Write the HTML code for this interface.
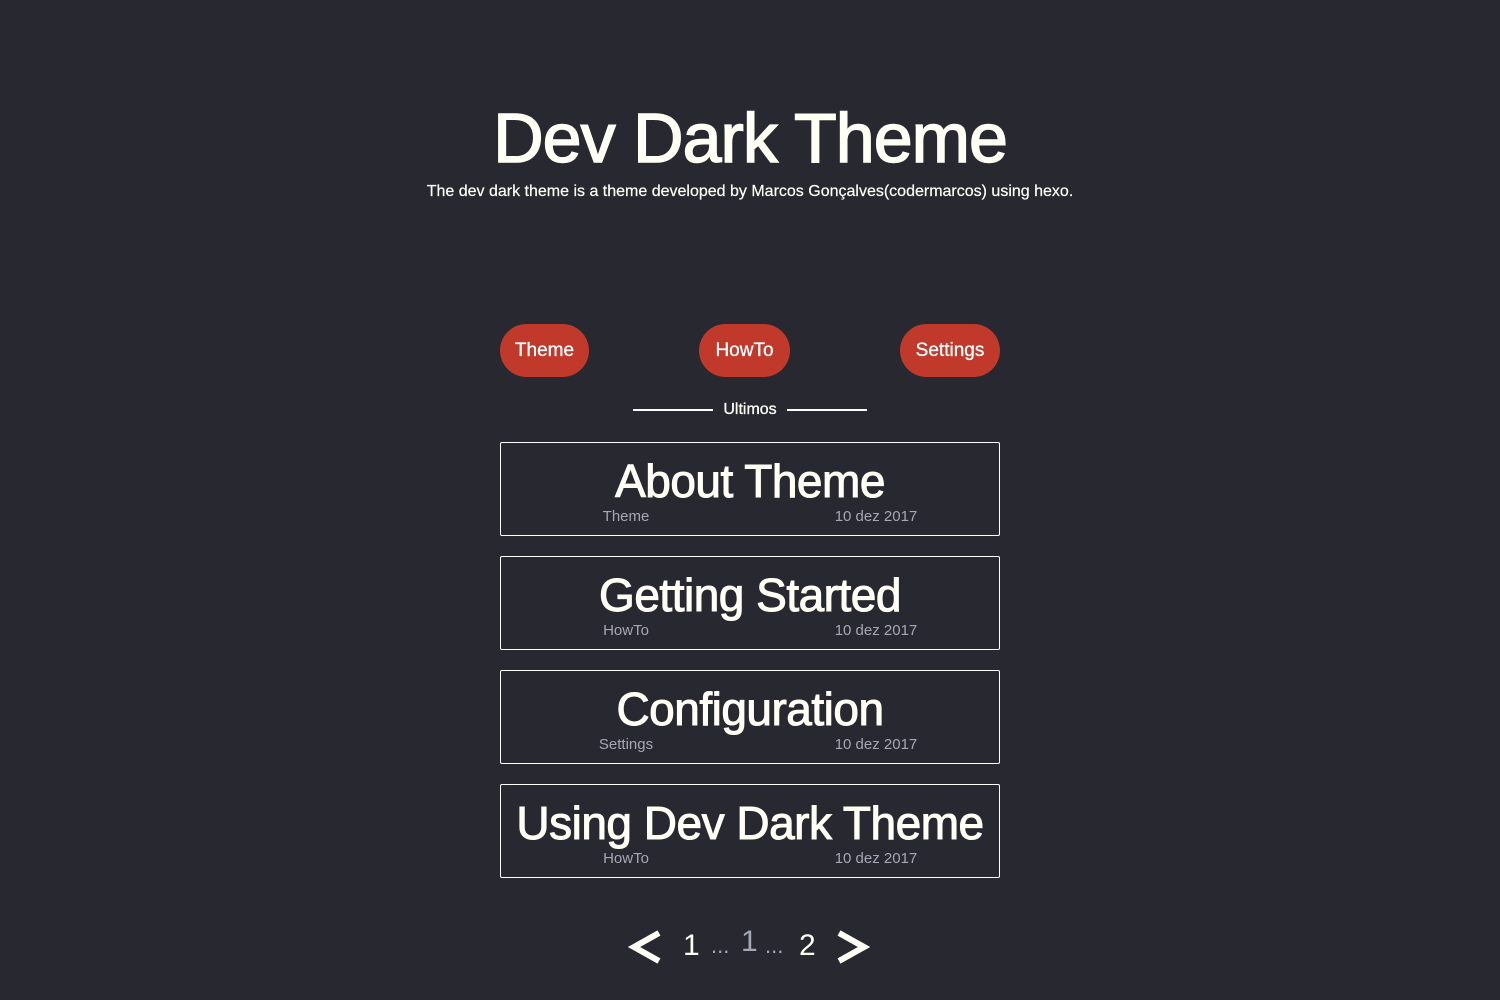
<!DOCTYPE html>
<html><head><meta charset="utf-8"><style>
*{margin:0;padding:0;box-sizing:border-box}
body{width:1500px;height:1000px;background:#282830;font-family:"Liberation Sans",sans-serif;color:#fffff5;position:relative;overflow:hidden}
.abs{position:absolute}
h1{position:absolute;left:0;width:1500px;top:98px;text-align:center;font-size:70px;font-weight:normal;letter-spacing:-1px;line-height:80px;-webkit-text-stroke:1.5px #fffff5}
.sub{top:183px;left:0;width:1500px;text-align:center;font-size:16px;line-height:18px;-webkit-text-stroke:0.2px #fff}
.btn{position:absolute;top:324px;height:53px;border-radius:27px;background:#c0392b;color:#fff;font-size:19px;line-height:53px;text-align:center;-webkit-text-stroke:0.3px #fff}
.line{position:absolute;top:409px;height:2px;background:#fff}
.card{position:absolute;left:500px;width:500px;height:94px;border:1px solid #fff;border-radius:2px}
.card .t{position:absolute;left:0;width:498px;top:10px;text-align:center;font-size:46px;line-height:56px;letter-spacing:-0.5px;-webkit-text-stroke:1px #fffff5}
.card .c{position:absolute;left:75px;width:100px;text-align:center;top:65px;font-size:15px;color:#a4a8b4}
.card .d{position:absolute;left:300px;width:150px;text-align:center;top:65px;font-size:15px;color:#a4a8b4}
.pg{position:absolute;top:926px;font-size:30px;line-height:40px}
</style></head><body>
<h1>Dev Dark Theme</h1>
<div class="abs sub">The dev dark theme is a theme developed by Marcos Gonçalves(codermarcos) using hexo.</div>
<div class="btn" style="left:500px;width:89px">Theme</div>
<div class="btn" style="left:699px;width:91px">HowTo</div>
<div class="btn" style="left:900px;width:100px">Settings</div>
<div class="line" style="left:633px;width:80px"></div>
<div class="abs" style="left:713px;width:74px;top:401px;text-align:center;font-size:16px;-webkit-text-stroke:0.3px #fff">Ultimos</div>
<div class="line" style="left:787px;width:80px"></div>
<div class="card" style="top:442px"><div class="t">About Theme</div><div class="c">Theme</div><div class="d">10 dez 2017</div></div>
<div class="card" style="top:556px"><div class="t">Getting Started</div><div class="c">HowTo</div><div class="d">10 dez 2017</div></div>
<div class="card" style="top:670px"><div class="t">Configuration</div><div class="c">Settings</div><div class="d">10 dez 2017</div></div>
<div class="card" style="top:784px"><div class="t">Using Dev Dark Theme</div><div class="c">HowTo</div><div class="d">10 dez 2017</div></div>
<svg class="abs" style="left:628px;top:928px" width="36" height="38"><path d="M31 5 L6 19 L31 33" fill="none" stroke="#fffff5" stroke-width="6"/></svg>
<div class="pg" style="left:683px">1</div>
<div class="pg" style="left:711px;font-size:22px;color:#a4a8b4">...</div>
<div class="pg" style="left:741px;top:922px;color:#a4a8b4">1</div>
<div class="pg" style="left:765px;font-size:22px;color:#a4a8b4">...</div>
<div class="pg" style="left:799px">2</div>
<svg class="abs" style="left:834px;top:928px" width="36" height="38"><path d="M5 5 L30 19 L5 33" fill="none" stroke="#fffff5" stroke-width="6"/></svg>
</body></html>
